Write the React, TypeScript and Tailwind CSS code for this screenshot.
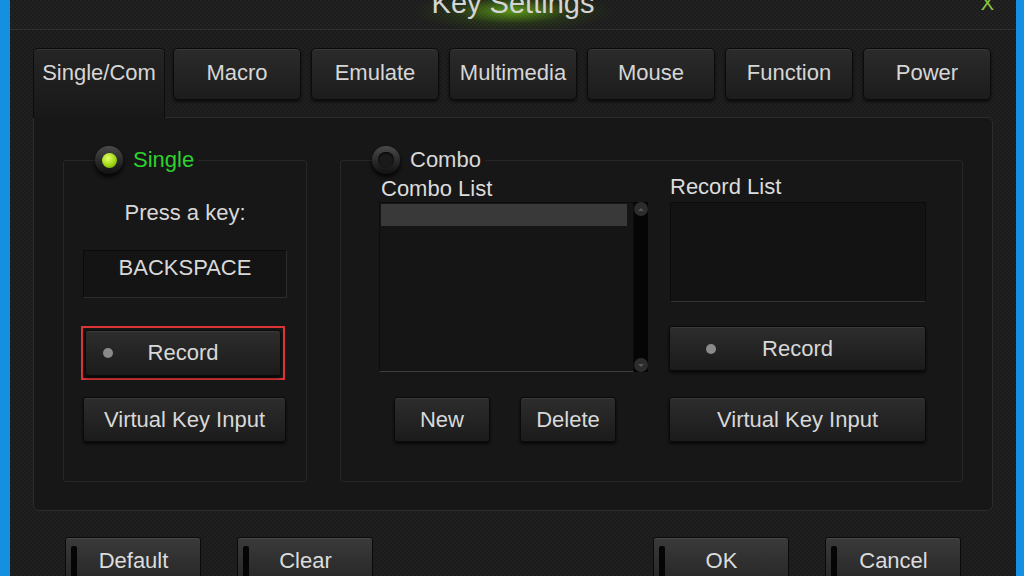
import React from "react";

const tabs = ["Macro", "Emulate", "Multimedia", "Mouse", "Function", "Power"];

function Btn({ children, className = "" }: { children: React.ReactNode; className?: string }) {
  return (
    <div
      className={`flex items-center justify-center rounded-[3px] border border-[#0a0a0a] bg-gradient-to-b from-[#2d2d2d] to-[#1b1b1b] text-[22px] leading-[24px] text-[#d8d8d8] shadow-[inset_0_1px_0_#3a3a3a,0_2px_3px_rgba(0,0,0,0.7)] ${className}`}
    >
      {children}
    </div>
  );
}

// record button, dot sits at a different offset on each side
function RecordBtn({ className = "", dot }: { className?: string; dot: string }) {
  return (
    <Btn className={`relative ${className}`}>
      <span className={`absolute top-1/2 h-[10px] w-[10px] -translate-y-1/2 rounded-full bg-[#8a8a8a] ${dot}`} />
      Record
    </Btn>
  );
}

function FootBtn({ label, className = "" }: { label: string; className?: string }) {
  return (
    <div
      className={`flex h-[52px] w-[136px] rounded-[3px] border border-[#0a0a0a] bg-gradient-to-b from-[#3a3a3a] to-[#242424] shadow-[inset_0_1px_0_#4a4a4a] ${className}`}
    >
      <div className="ml-[5px] mt-[8px] w-[6px] rounded-t-[2px] bg-[#050505]" />
      <div className="flex-1 pr-[10px] pt-[11px] text-center text-[22px] leading-[24px] text-[#dcdcdc]">{label}</div>
    </div>
  );
}

function Radio({ on }: { on: boolean }) {
  return (
    <div className="flex h-[28px] w-[28px] items-center justify-center rounded-full bg-gradient-to-b from-[#4a4a4a] to-[#111] shadow-[0_3px_4px_rgba(0,0,0,0.9)]">
      {on ? (
        <div className="h-[15px] w-[15px] rounded-full bg-[radial-gradient(circle_at_40%_35%,#e4ff6a,#9fd814_55%,#5f8a06)]" />
      ) : (
        <div className="h-[16px] w-[16px] rounded-full bg-[#1a1a1a] shadow-[inset_0_1px_2px_#000]" />
      )}
    </div>
  );
}

export default function App() {
  return (
    <div className="flex h-[576px] w-[1024px] overflow-hidden bg-[#1590e0] font-['Liberation_Sans',Arial,sans-serif]">
      <div className="ml-[10px] flex h-full w-[1006px] flex-col bg-[#1c1c1c]">
        {/* Title bar */}
        <div className="grid h-[30px] shrink-0 grid-cols-[1fr_auto_1fr] overflow-hidden border-b border-[#303030] bg-[conic-gradient(#232323_25%,#1b1b1b_0_50%,#232323_0_75%,#1b1b1b_0)] bg-[length:4px_4px]">
          <div />
          <div className="-mt-[11px] bg-[radial-gradient(ellipse_at_50%_55%,rgba(110,190,20,0.75),rgba(60,110,10,0.25)_40%,transparent_70%)] px-[20px] text-[29px] leading-none text-[#d4d4d4]">
            Key Settings
          </div>
          <div className="flex justify-end pr-[22px]">
            <span className="-mt-[7px] text-[20px] leading-none text-[#8cc63f]">X</span>
          </div>
        </div>

        {/* Body */}
        <div className="flex flex-1 flex-col bg-[conic-gradient(#1f1f1f_25%,#1b1b1b_0_50%,#1f1f1f_0_75%,#1b1b1b_0)] bg-[length:4px_4px] pl-[23px] pr-[23px] pt-[18px]">
          {/* Tabs */}
          <div className="flex items-start">
            <div className="relative z-10 -mb-px h-[70px] w-[132px] rounded-t-[5px] border border-b-0 border-[#0c0c0c] bg-gradient-to-b from-[#252525] to-[#181818] pt-[12px] text-center text-[22px] leading-[24px] text-[#d6d6d6] shadow-[inset_0_1px_0_#363636]">
              Single/Com
            </div>
            <div className="ml-[8px] flex gap-[10px]">
              {tabs.map((t) => (
                <div
                  key={t}
                  className="h-[52px] w-[128px] rounded-[5px] border border-[#0b0b0b] bg-gradient-to-b from-[#2b2b2b] to-[#1c1c1c] pt-[12px] text-center text-[22px] leading-[24px] text-[#d6d6d6] shadow-[inset_0_1px_0_#3a3a3a,0_2px_3px_rgba(0,0,0,0.6)]"
                >
                  {t}
                </div>
              ))}
            </div>
          </div>

          {/* Panel */}
          <div className="flex h-[394px] w-[960px] gap-[33px] rounded-b-[6px] rounded-tr-[6px] border border-[#2c2c2c] bg-[#171717] pl-[29px] pt-[28px]">
            {/* Single group */}
            <fieldset className="h-[336px] w-[244px] rounded-[3px] border border-[#272727]">
              <legend className="ml-[31px] flex h-[28px] items-center gap-[10px] pr-[4px]">
                <Radio on />
                <span className="text-[22px] leading-[28px] text-[#2ed12e]">Single</span>
              </legend>
              <div className="flex flex-col">
                <div className="mt-[27px] text-center text-[22px] leading-[24px] text-[#d8d8d8]">Press a key:</div>
                <div className="ml-[19px] mt-[25px] h-[48px] w-[204px] border border-[#0a0a0a] border-b-[#2c2c2c] border-r-[#2c2c2c] bg-[#141414] pt-[5px] text-center text-[22px] leading-[24px] text-[#d8d8d8]">
                  BACKSPACE
                </div>
                <div className="ml-[17px] mt-[28px] w-[204px] border-2 border-[#dd3535] p-[2px]">
                  <RecordBtn className="h-[46px]" dot="left-[17px]" />
                </div>
                <Btn className="ml-[19px] mt-[17px] h-[45px] w-[203px]">Virtual Key Input</Btn>
              </div>
            </fieldset>

            {/* Combo group */}
            <fieldset className="h-[336px] w-[623px] rounded-[3px] border border-[#272727]">
              <legend className="ml-[31px] flex h-[28px] items-center gap-[10px] pr-[4px]">
                <Radio on={false} />
                <span className="text-[22px] leading-[28px] text-[#d8d8d8]">Combo</span>
              </legend>
              <div className="flex gap-[22px] pl-[38px]">
                <div className="flex w-[269px] flex-col">
                  <div className="mt-[3px] pl-[2px] text-[22px] leading-[24px] text-[#dcdcdc]">Combo List</div>
                  <div className="mt-[1px] flex h-[170px]">
                    <div className="flex-1 border border-[#0c0c0c] border-b-[#3c3c3c] bg-[#151515] p-[1px]">
                      <div className="mr-[5px] h-[22px] bg-[#393939]" />
                    </div>
                    <div className="flex w-[14px] flex-col justify-between bg-[#050505]">
                      <div className="flex h-[14px] w-[14px] items-center justify-center rounded-full bg-[#2c2c2c]">
                        <div className="h-0 w-0 border-x-[3px] border-b-[3px] border-x-transparent border-b-[#555]" />
                      </div>
                      <div className="flex h-[14px] w-[14px] items-center justify-center rounded-full bg-[#2c2c2c]">
                        <div className="h-0 w-0 border-x-[3px] border-t-[3px] border-x-transparent border-t-[#555]" />
                      </div>
                    </div>
                  </div>
                  <div className="mt-[25px] flex gap-[30px] pl-[15px]">
                    <Btn className="h-[45px] w-[96px]">New</Btn>
                    <Btn className="h-[45px] w-[96px]">Delete</Btn>
                  </div>
                </div>
                <div className="flex w-[257px] flex-col">
                  <div className="mt-[1px] text-[22px] leading-[24px] text-[#dcdcdc]">Record List</div>
                  <div className="mt-[3px] h-[100px] w-[256px] rounded-[2px] border border-[#0b0b0b] border-b-[#333] bg-[#131313]" />
                  <RecordBtn className="-ml-px mt-[24px] h-[45px] w-[257px]" dot="left-[36px]" />
                  <Btn className="-ml-px mt-[26px] h-[45px] w-[257px]">Virtual Key Input</Btn>
                </div>
              </div>
            </fieldset>
          </div>

          {/* Footer buttons */}
          <div className="mt-[26px] flex pl-[32px]">
            <FootBtn label="Default" />
            <FootBtn label="Clear" className="ml-[36px]" />
            <FootBtn label="OK" className="ml-[280px]" />
            <FootBtn label="Cancel" className="ml-[36px]" />
          </div>
        </div>
      </div>
    </div>
  );
}
